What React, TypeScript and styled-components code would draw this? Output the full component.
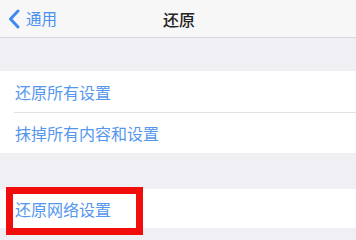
import React from 'react';
import styled, { createGlobalStyle } from 'styled-components';

const GlobalStyle = createGlobalStyle`
  html, body {
    margin: 0;
    padding: 0;
    background: #efeff4;
  }
  body {
    font-family: "Noto Sans CJK SC", "Noto Sans", sans-serif;
    -webkit-font-smoothing: antialiased;
  }
`;

const Page = styled.div`
  width: 356px;
  height: 240px;
  overflow: hidden;
  background: #efeff4;
  position: relative;
`;

const NavBar = styled.div`
  height: 37px;
  background: #f7f7f8;
  border-bottom: 1px solid #d6d6da;
  display: grid;
  grid-template-columns: 1fr auto 1fr;
  align-items: center;
`;

const BackButton = styled.div`
  display: flex;
  align-items: center;
  gap: 6px;
  padding-left: 8px;
  color: #4a90ee;
  font-size: 15.5px;
  line-height: 1;
`;

const Title = styled.div`
  font-size: 16px;
  font-weight: 500;
  color: #222222;
  line-height: 1;
  padding-left: 2px;
`;

const Spacer = styled.div<{ $h: number }>`
  height: ${(p) => p.$h}px;
`;

const Group = styled.div`
  background: #ffffff;
`;

const Row = styled.div<{ $h: number }>`
  height: ${(p) => p.$h}px;
  display: flex;
  align-items: center;
  padding-left: 15px;
  color: #5597ec;
  font-size: 16px;
  line-height: 1;
`;

const Divider = styled.div`
  height: 1px;
  margin-left: 14px;
  background: #e2e2e6;
`;

const Highlight = styled.div`
  position: absolute;
  left: 6px;
  top: 187px;
  width: 123px;
  height: 34px;
  border: 7px solid #f20d0d;
`;

function Chevron() {
  return (
    <svg width="12" height="20" viewBox="0 0 12 20">
      <path
        d="M10 2 L2.5 10 L10 18"
        fill="none"
        stroke="#3e8af0"
        strokeWidth="3"
        strokeLinecap="round"
        strokeLinejoin="round"
      />
    </svg>
  );
}

export default function App() {
  return (
    <>
      <GlobalStyle />
      <Page>
        <NavBar>
          <BackButton>
            <Chevron />
            <span>通用</span>
          </BackButton>
          <Title>还原</Title>
          <div />
        </NavBar>
        <Spacer $h={33} />
        <Group>
          <Row $h={41}>还原所有设置</Row>
          <Divider />
          <Row $h={40}>抹掉所有内容和设置</Row>
        </Group>
        <Spacer $h={36} />
        <Group>
          <Row $h={39}>还原网络设置</Row>
        </Group>
        <Highlight />
      </Page>
    </>
  );
}
